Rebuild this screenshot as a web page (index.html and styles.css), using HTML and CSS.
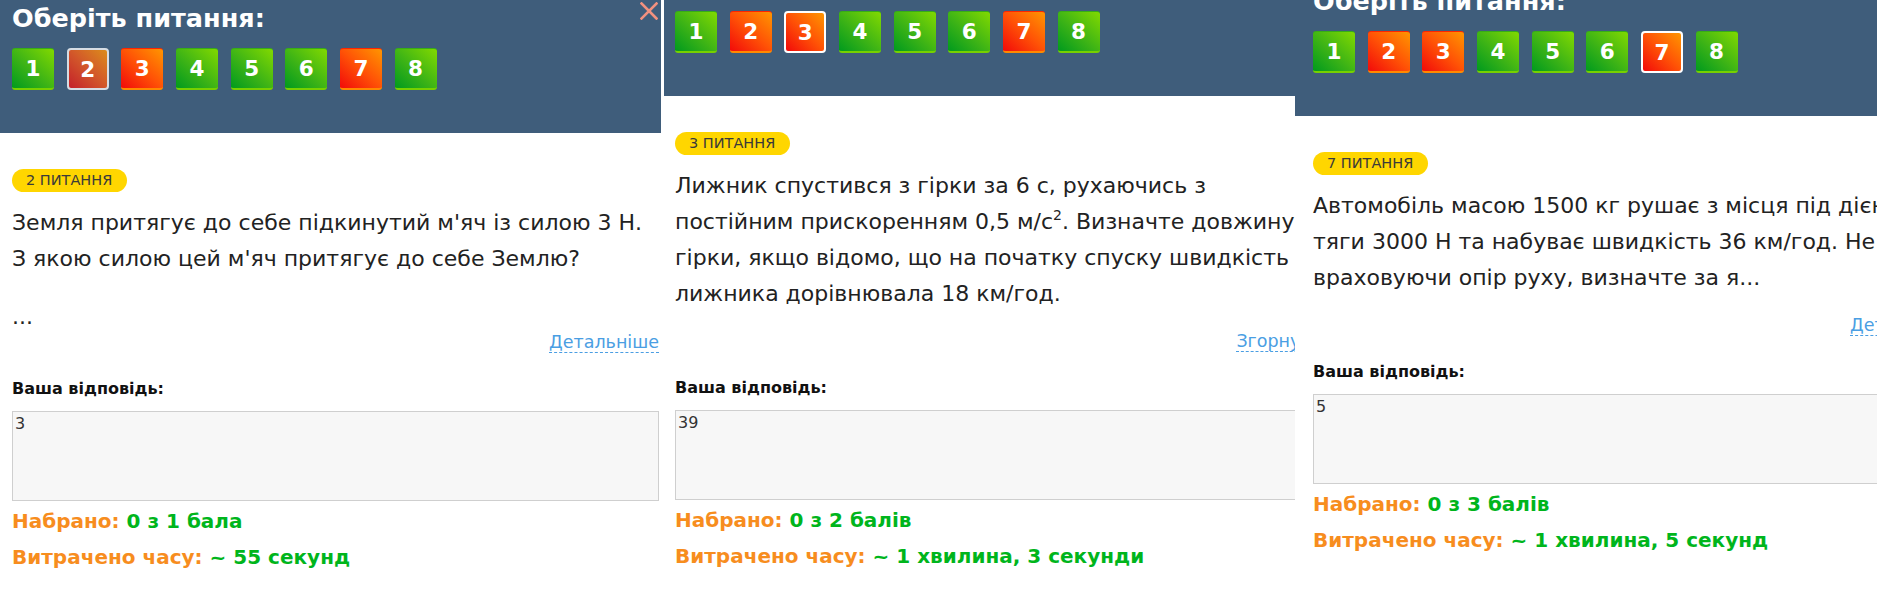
FILE: index.html
```html
<!DOCTYPE html>
<html lang="uk">
<head>
<meta charset="utf-8">
<title>Питання</title>
<link rel="stylesheet" href="styles.css">
</head>
<body>
<main class="stage">
  <section class="panel p1">
    <div class="sheet">
      <header class="qhead">
        <h2 class="qtitle">Оберіть питання:</h2>
        <button class="close" aria-label="Закрити"><svg viewBox="0 0 18 18" width="18" height="18"><path d="M1.5 1.5 L16.5 16.5 M16.5 1.5 L1.5 16.5" stroke="#f2917f" stroke-width="2.6" stroke-linecap="square"/></svg></button>
        <nav class="nums">
          <span class="num ok">1</span>
          <span class="num dim">2</span>
          <span class="num bad">3</span>
          <span class="num ok">4</span>
          <span class="num ok">5</span>
          <span class="num ok">6</span>
          <span class="num bad">7</span>
          <span class="num ok">8</span>
        </nav>
      </header>
      <div class="qbody">
        <span class="badge">2 ПИТАННЯ</span>
        <div class="qtext clamp">
          <p>Земля притягує до себе підкинутий м'яч із силою 3 Н.<br>З якою силою цей м'яч притягує до себе Землю?</p>
          <p class="dots">...</p>
        </div>
        <div class="more"><a href="#">Детальніше</a></div>
        <div class="label">Ваша відповідь:</div>
        <textarea class="answer" readonly>3</textarea>
        <p class="score"><span class="k">Набрано:</span> <span class="v">0 з 1 бала</span></p>
        <p class="score"><span class="k">Витрачено часу:</span> <span class="v">~ 55 секунд</span></p>
      </div>
    </div>
  </section>

  <section class="panel p2">
    <div class="sheet">
      <header class="qhead">
        <h2 class="qtitle">Оберіть питання:</h2>
        <button class="close" aria-label="Закрити"><svg viewBox="0 0 18 18" width="18" height="18"><path d="M1.5 1.5 L16.5 16.5 M16.5 1.5 L1.5 16.5" stroke="#f2917f" stroke-width="2.6" stroke-linecap="square"/></svg></button>
        <nav class="nums">
          <span class="num ok">1</span>
          <span class="num bad">2</span>
          <span class="num bad sel">3</span>
          <span class="num ok">4</span>
          <span class="num ok">5</span>
          <span class="num ok">6</span>
          <span class="num bad">7</span>
          <span class="num ok">8</span>
        </nav>
      </header>
      <div class="qbody">
        <span class="badge">3 ПИТАННЯ</span>
        <div class="qtext">
          <p>Лижник спустився з гірки за 6 с, рухаючись з<br>постійним прискоренням 0,5 м/с<sup>2</sup>. Визначте довжину<br>гірки, якщо відомо, що на початку спуску швидкість<br>лижника дорівнювала 18 км/год.</p>
        </div>
        <div class="more"><a href="#">Згорнути</a></div>
        <div class="label">Ваша відповідь:</div>
        <textarea class="answer" readonly>39</textarea>
        <p class="score"><span class="k">Набрано:</span> <span class="v">0 з 2 балів</span></p>
        <p class="score"><span class="k">Витрачено часу:</span> <span class="v">~ 1 хвилина, 3 секунди</span></p>
      </div>
    </div>
  </section>

  <section class="panel p3">
    <div class="sheet">
      <header class="qhead">
        <h2 class="qtitle">Оберіть питання:</h2>
        <button class="close" aria-label="Закрити"><svg viewBox="0 0 18 18" width="18" height="18"><path d="M1.5 1.5 L16.5 16.5 M16.5 1.5 L1.5 16.5" stroke="#f2917f" stroke-width="2.6" stroke-linecap="square"/></svg></button>
        <nav class="nums">
          <span class="num ok">1</span>
          <span class="num bad">2</span>
          <span class="num bad">3</span>
          <span class="num ok">4</span>
          <span class="num ok">5</span>
          <span class="num ok">6</span>
          <span class="num bad sel">7</span>
          <span class="num ok">8</span>
        </nav>
      </header>
      <div class="qbody">
        <span class="badge">7 ПИТАННЯ</span>
        <div class="qtext clamp">
          <p>Автомобіль масою 1500 кг рушає з місця під дією<br>тяги 3000 Н та набуває швидкість 36 км/год. Не<br>враховуючи опір руху, визначте за я...</p>
        </div>
        <div class="more"><a href="#">Детальніше</a></div>
        <div class="label">Ваша відповідь:</div>
        <textarea class="answer" readonly>5</textarea>
        <p class="score"><span class="k">Набрано:</span> <span class="v">0 з 3 балів</span></p>
        <p class="score"><span class="k">Витрачено часу:</span> <span class="v">~ 1 хвилина, 5 секунд</span></p>
      </div>
    </div>
  </section>
</main>
</body>
</html>
```

FILE: styles.css
```css
* { box-sizing: border-box; }
html, body { margin: 0; padding: 0; background: #fff; }
body { font-family: "DejaVu Sans", Verdana, sans-serif; color: #222; }

.stage { display: flex; height: 596px; overflow: hidden; }
.panel { flex: none; height: 596px; overflow: hidden; background: #fff; }
.p1 { width: 661px; margin-right: 3px; }
.p2 { width: 631px; }
.p3 { flex: 1 1 auto; }

.sheet { --pad: 12px; width: calc(var(--pad) + 649px); }
.p2 .sheet { --pad: 11px; margin-top: -37px; }
.p3 .sheet { --pad: 18px; margin-top: -17px; }

.qhead { position: relative; background: #3f5d7b; padding: 0 0 43px var(--pad); }
.qtitle { margin: 0; font-size: 25.5px; line-height: 36px; font-weight: 700; color: #fff; white-space: nowrap; }
.close { position: absolute; top: 2px; right: 3px; width: 18px; height: 18px; padding: 0; border: 0; background: none; display: block; }
.close svg { display: block; }

.nums { display: flex; gap: 12.67px; margin-top: 12px; }
.num { width: 42px; height: 42px; display: flex; align-items: center; justify-content: center; color: #fff; font-weight: 700; font-size: 21.5px; border-radius: 3px; }
.ok { background: linear-gradient(to top right, #009a1e 0%, #3cb316 45%, #82d900 100%); border-top: 1px solid #38ad16; border-bottom: 2px solid #77d000; }
.bad { background: linear-gradient(to top right, #f20a0a 0%, #ff5206 50%, #ff9600 100%); border-top: 1px solid #ff2500; border-bottom: 2px solid #ff8a00; }
.sel { border: 2px solid #fff; border-radius: 4px; }
.dim { background: linear-gradient(to top right, #c4202a 0%, #d2572a 50%, #dc8c1c 100%); border: 2px solid #d6dce3; border-radius: 4px; }

.qbody { width: calc(var(--pad) + 647px); padding: 36px 0 0 var(--pad); }
.badge { display: inline-block; height: 23px; line-height: 23px; padding: 0 15px 0 14px; border-radius: 12px; background: #ffd600; color: #3a3a3a; font-size: 14.5px; vertical-align: top; white-space: nowrap; }
.qtext { margin-top: 13px; font-size: 22px; line-height: 36px; white-space: nowrap; }
.qtext p { margin: 0; }
.qtext sup { font-size: 14px; line-height: 0; vertical-align: 9px; }
.clamp { height: 108px; }
.qtext .dots { margin-top: 22px; }

.more { margin-top: 17px; text-align: right; font-size: 17.5px; line-height: 24px; white-space: nowrap; }
.more a { color: #4a9ee3; text-decoration: none; border-bottom: 1px dashed #4a9ee3; }

.label { margin-top: 25px; font-weight: 700; font-size: 16px; line-height: 20px; color: #111; }
.answer { display: block; margin-top: 12px; width: 647px; height: 90px; padding: 2px 2px; border: 1px solid #cfcfcf; background: #f7f7f7; font-family: "DejaVu Sans", sans-serif; font-size: 16px; line-height: 20px; color: #333; resize: none; border-radius: 0; outline: none; }

.score { margin: 2px 0 0; font-weight: 700; font-size: 20px; line-height: 36px; white-space: nowrap; }
.score + .score { margin-top: 0; }
.k { color: #f78d1e; }
.v { color: #00b51c; }
```
